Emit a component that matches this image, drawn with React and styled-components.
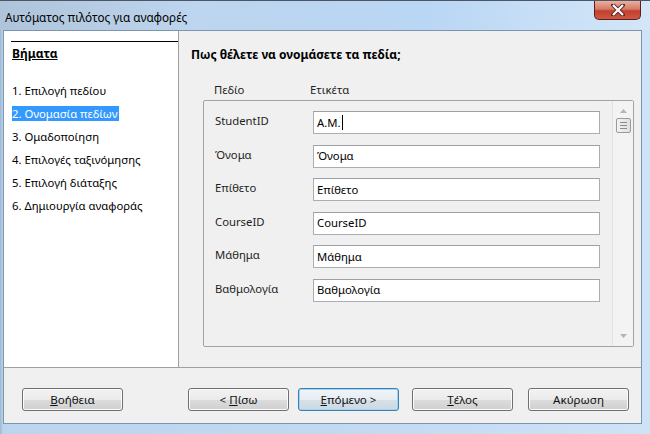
import styled, { createGlobalStyle } from "styled-components";

const GlobalStyle = createGlobalStyle`
  html, body { margin: 0; padding: 0; background: #ffffff; }
  body {
    font-family: "Noto Sans", "Liberation Sans", sans-serif;
    font-size: 11.3px;
    color: #000;
  }
  * { box-sizing: border-box; }
`;

const Window = styled.div`
  width: 650px;
  height: 434px;
  display: flex;
  flex-direction: column;
  overflow: hidden;
  border-top: 1px solid #4b5767;
  background: linear-gradient(to right, #9fb8d2 0px, #bcd4ee 3px, #c3daf2 60%, #cfe3f7 100%);
`;

const TitleBar = styled.div`
  height: 29px;
  display: flex;
  align-items: flex-start;
  padding-left: 5px;
  background: linear-gradient(to right, #aec4da 0%, #bdd5ee 30%, #b9d6f4 65%, #d4e6f8 100%);
`;

const Title = styled.div`
  padding-top: 8px;
  font-size: 11.7px;
  line-height: 16px;
  color: #000;
`;

const CloseButton = styled.div`
  margin-left: auto;
  margin-right: 9px;
  width: 47px;
  height: 19px;
  border: 1px solid #5a1f1f;
  border-top: none;
  border-radius: 0 0 5px 5px;
  background: linear-gradient(#eab0a2 0%, #d67a66 45%, #c0402e 55%, #d0583f 100%);
  display: flex;
  align-items: center;
  justify-content: center;
`;

const Body = styled.div`
  flex: 1;
  display: flex;
  padding: 0 8px 10px 3px;
`;

const Client = styled.div`
  flex: 1;
  display: flex;
  flex-direction: column;
  border: 1px solid #7d94ae;
  background: #f0f0f0;
`;

const Main = styled.div`
  height: 336px;
  display: flex;
`;

const Sidebar = styled.div`
  width: 175px;
  background: #ffffff;
  border-right: 1px solid #a0a0a0;
  padding: 10px 0 0 7px;
`;

const StepsHeading = styled.div`
  border-top: 1px solid #000;
  padding: 4px 0 0 1px;
  font-size: 12px;
  line-height: 16px;
  font-weight: bold;
  text-decoration: underline;
`;

const StepList = styled.ol`
  list-style: none;
  margin: 21px 0 0 0;
  padding: 0 0 0 1px;
  display: flex;
  flex-direction: column;
  gap: 7px;
`;

const Step = styled.li`
  line-height: 16px;
  height: 16px;
`;

const StepText = styled.span`
  padding: 0 1px 0 0;
  background: ${(p) => (p.$active ? "#3399ff" : "transparent")};
  color: ${(p) => (p.$active ? "#ffffff" : "#000")};
`;

const Panel = styled.div`
  flex: 1;
  display: flex;
  flex-direction: column;
  padding: 16px 7px 0 12px;
`;

const PanelTitle = styled.div`
  font-size: 12px;
  line-height: 16px;
  font-weight: bold;
`;

const ColumnHeads = styled.div`
  display: flex;
  margin-top: 19px;
  padding-left: 23px;
  line-height: 16px;
  color: #1e1e1e;
`;

const HeadCell = styled.div`
  width: ${(p) => p.$w || "auto"};
`;

const FieldBox = styled.div`
  margin: 2px 0 0 12px;
  height: 247px;
  display: flex;
  border: 1px solid #a3a3a3;
  border-radius: 2px;
  background: #f0f0f0;
`;

const Rows = styled.div`
  flex: 1;
  display: flex;
  flex-direction: column;
  gap: 10.6px;
  padding: 10px 0 0 11px;
`;

const Row = styled.div`
  display: flex;
  align-items: center;
`;

const FieldName = styled.div`
  width: 98px;
  padding-bottom: 3px;
  line-height: 16px;
  color: #1e1e1e;
`;

const TextBox = styled.div`
  width: 287px;
  height: 23px;
  border: 1px solid #abadb3;
  border-top-color: #9da0a6;
  background: #ffffff;
  padding: 0 3px;
  display: flex;
  align-items: center;
  line-height: 16px;
`;

const Caret = styled.span`
  display: inline-block;
  width: 1px;
  height: 15px;
  background: #000;
  margin-left: 1px;
`;

const ScrollBar = styled.div`
  width: 21px;
  border-left: 1px solid #e2e2e2;
  background: #f3f3f3;
  display: flex;
  flex-direction: column;
  align-items: center;
  padding: 8px 0 8px;
`;

const Thumb = styled.div`
  margin-top: 5px;
  width: 15px;
  height: 15px;
  border: 1px solid #9b9b9b;
  border-radius: 2px;
  background: linear-gradient(to right, #f2f2f2, #e0e0e0);
  display: flex;
  flex-direction: column;
  align-items: center;
  justify-content: center;
  gap: 2px;
`;

const Grip = styled.div`
  width: 7px;
  height: 1px;
  background: #8c8c8c;
`;

const Spacer = styled.div`
  flex: 1;
`;

const Footer = styled.div`
  flex: 1;
  border-top: 1px solid #a0a0a0;
  display: flex;
  align-items: flex-start;
  padding: 20px 0 0 18px;
`;

const Button = styled.div`
  width: 101px;
  height: 23px;
  margin-left: ${(p) => p.$gap || "0px"};
  border: 1px solid ${(p) => (p.$focused ? "#3c7fb1" : "#707070")};
  border-radius: 3px;
  background: ${(p) =>
    p.$focused
      ? "linear-gradient(#f0f4f7 0%, #e6edf2 50%, #d8e1e8 50%, #cdd8e0 100%)"
      : "linear-gradient(#f2f2f2 0%, #ebebeb 50%, #dddddd 50%, #cfcfcf 100%)"};
  box-shadow: ${(p) => (p.$focused ? "inset 0 0 0 1px #9fd6f5" : "inset 0 0 0 1px #fbfbfb")};
  display: flex;
  align-items: center;
  justify-content: center;
  font-size: 11.6px;
  line-height: 16px;
  color: #111;
`;

const Key = styled.span`
  text-decoration: underline;
`;

function ArrowUp() {
  return (
    <svg width="7" height="4" viewBox="0 0 7 4">
      <path d="M0 4 L3.5 0 L7 4 Z" fill="#b4b4b4" />
    </svg>
  );
}

function ArrowDown() {
  return (
    <svg width="7" height="4" viewBox="0 0 7 4">
      <path d="M0 0 L3.5 4 L7 0 Z" fill="#b4b4b4" />
    </svg>
  );
}

const steps = [
  "1. Επιλογή πεδίου",
  "2. Ονομασία πεδίων",
  "3. Ομαδοποίηση",
  "4. Επιλογές ταξινόμησης",
  "5. Επιλογή διάταξης",
  "6. Δημιουργία αναφοράς",
];

const fields = [
  { name: "StudentID", label: "Α.Μ.", caret: true },
  { name: "Όνομα", label: "Όνομα" },
  { name: "Επίθετο", label: "Επίθετο" },
  { name: "CourseID", label: "CourseID" },
  { name: "Μάθημα", label: "Μάθημα" },
  { name: "Βαθμολογία", label: "Βαθμολογία" },
];

export default function App() {
  return (
    <>
      <GlobalStyle />
      <Window>
        <TitleBar>
          <Title>Αυτόματος πιλότος για αναφορές</Title>
          <CloseButton>
            <svg width="14" height="12" viewBox="0 0 14 12">
              <path
                d="M2 1 L12 11 M12 1 L2 11"
                stroke="#5b2a24"
                strokeWidth="4"
                strokeLinecap="square"
              />
              <path d="M2 1 L12 11 M12 1 L2 11" stroke="#ffffff" strokeWidth="2.2" />
            </svg>
          </CloseButton>
        </TitleBar>
        <Body>
          <Client>
            <Main>
              <Sidebar>
                <StepsHeading>Βήματα</StepsHeading>
                <StepList>
                  {steps.map((s, i) => (
                    <Step key={s}>
                      <StepText $active={i === 1}>{s}</StepText>
                    </Step>
                  ))}
                </StepList>
              </Sidebar>
              <Panel>
                <PanelTitle>Πως θέλετε να ονομάσετε τα πεδία;</PanelTitle>
                <ColumnHeads>
                  <HeadCell $w="96px">Πεδίο</HeadCell>
                  <HeadCell>Ετικέτα</HeadCell>
                </ColumnHeads>
                <FieldBox>
                  <Rows>
                    {fields.map((f) => (
                      <Row key={f.name}>
                        <FieldName>{f.name}</FieldName>
                        <TextBox>
                          {f.label}
                          {f.caret && <Caret />}
                        </TextBox>
                      </Row>
                    ))}
                  </Rows>
                  <ScrollBar>
                    <ArrowUp />
                    <Thumb>
                      <Grip />
                      <Grip />
                      <Grip />
                    </Thumb>
                    <Spacer />
                    <ArrowDown />
                  </ScrollBar>
                </FieldBox>
              </Panel>
            </Main>
            <Footer>
              <Button>
                <Key>Β</Key>οήθεια
              </Button>
              <Button $gap="65px">
                &lt;&nbsp;<Key>Π</Key>ίσω
              </Button>
              <Button $gap="9px" $focused>
                <Key>Ε</Key>πόμενο &gt;
              </Button>
              <Button $gap="13px">
                <Key>Τ</Key>έλος
              </Button>
              <Button $gap="15px">Ακύρωση</Button>
            </Footer>
          </Client>
        </Body>
      </Window>
    </>
  );
}
